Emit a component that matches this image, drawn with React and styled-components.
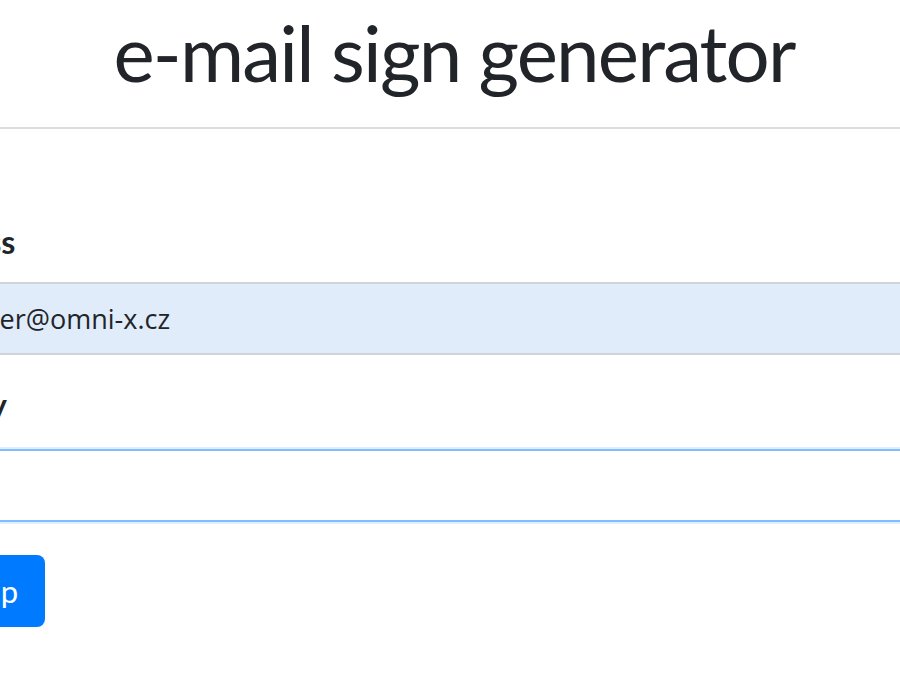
import React from "react";
import styled, { createGlobalStyle } from "styled-components";

const GlobalStyle = createGlobalStyle`
  html, body {
    margin: 0;
    padding: 0;
    background: #fff;
    overflow: hidden;
  }
  body {
    font-family: Lato, "Noto Sans", sans-serif;
    color: #212529;
  }
`;

const Page = styled.div`
  width: 100%;
  height: 700px;
  overflow: hidden;
`;

const Header = styled.header`
  padding: 6px 0 0 8px;
  text-align: center;
`;

const Title = styled.h1`
  margin: 0;
  font-size: 78px;
  font-weight: 400;
  line-height: 1.2;
  letter-spacing: -1.8px;
`;

const Divider = styled.hr`
  margin: 27px 0 0;
  border: 0;
  border-top: 2px solid #dcdcdc;
`;

// the form is wider than the window: its left side sits out of view
const Form = styled.form`
  display: flex;
  flex-direction: column;
  align-items: flex-start;
  margin-left: -109px;
  width: calc(100% + 400px);
  padding-top: 89px;
`;

const Field = styled.div`
  display: flex;
  flex-direction: column;
  align-self: stretch;
  margin-bottom: ${({ gap }) => gap}px;
`;

const Label = styled.label`
  font-size: 32px;
  font-weight: 700;
  line-height: 48px;
  margin-bottom: ${({ space }) => space || 16}px;
`;

const Input = styled.input`
  box-sizing: border-box;
  height: 73px;
  padding: 0 24px;
  border: 2px solid ${({ focused }) => (focused ? "#80bdff" : "#ced4da")};
  border-radius: 8px;
  background: ${({ filled }) => (filled ? "#e1ecfb" : "#fff")};
  font-family: "Open Sans", sans-serif;
  font-size: 27px;
  color: #212529;
  outline: none;
  box-shadow: ${({ focused }) =>
    focused ? "0 0 0 2px rgba(0, 123, 255, 0.12)" : "none"};
`;

const Submit = styled.button`
  height: 72px;
  padding: 0 27px;
  border: 0;
  border-radius: 8px;
  background: #007bff;
  color: #fff;
  font-family: Lato, sans-serif;
  font-size: 31px;
  cursor: pointer;
`;

export default function App() {
  return (
    <Page>
      <GlobalStyle />
      <Header>
        <Title>e-mail sign generator</Title>
      </Header>
      <Divider />
      <Form onSubmit={(e) => e.preventDefault()}>
        <Field gap={26}>
          <Label>Business</Label>
          <Input filled defaultValue="designer@omni-x.cz" />
        </Field>
        <Field gap={33}>
          <Label space={20}>Country</Label>
          <Input focused />
        </Field>
        <Submit type="submit">Sign up</Submit>
      </Form>
    </Page>
  );
}
